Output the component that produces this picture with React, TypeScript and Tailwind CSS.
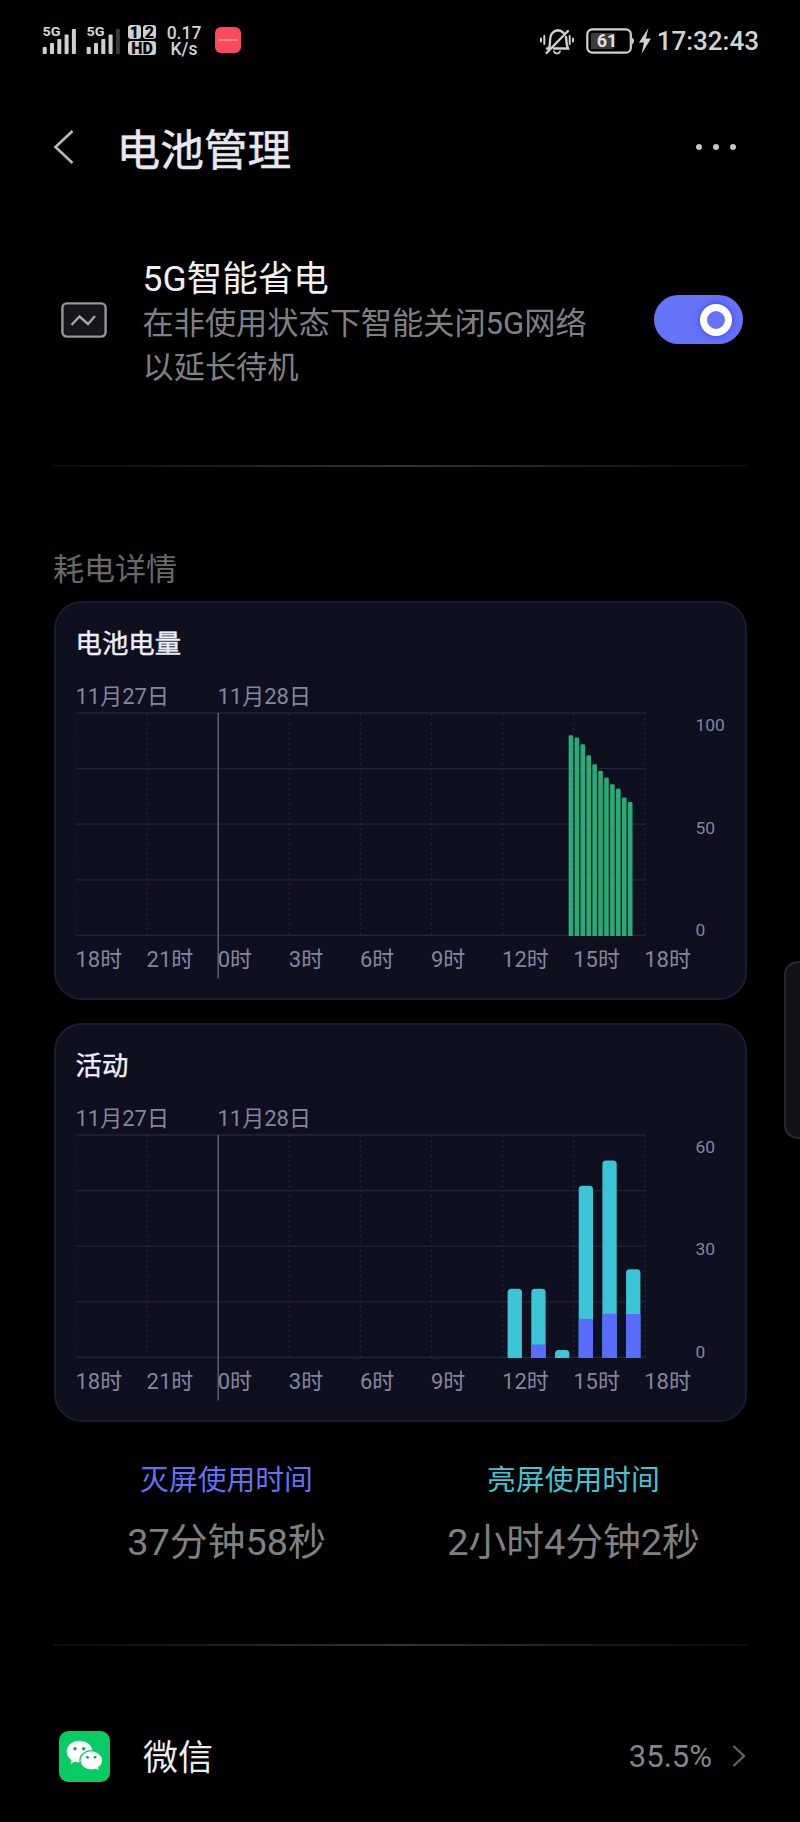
import React from 'react';

interface ActivityBar {
  hour: number;
  total: number;
  off: number;
}

interface ChartCardProps {
  title: string;
  scale: number[];
  children: React.ReactNode;
}

const CHART_W = 569;
const CHART_H = 222.4;
const STEP = 71.1;

const hours = ['18时', '21时', '0时', '3时', '6时', '9时', '12时', '15时', '18时'];
const batteryLevels = [90, 89, 86, 81, 77, 74, 71, 68, 66, 62, 60];
const activity: ActivityBar[] = [
  { hour: 18, total: 18.5, off: 0 },
  { hour: 19, total: 18.5, off: 3.5 },
  { hour: 20, total: 2, off: 0 },
  { hour: 21, total: 46.3, off: 10.4 },
  { hour: 22, total: 53.1, off: 11.8 },
  { hour: 23, total: 23.8, off: 11.7 },
];

// bar with only its top corners rounded
const barPath = (x: number, w: number, h: number, r: number) =>
  `M${x} ${CHART_H + 0.6}V${CHART_H - h + r}q0 ${-r} ${r} ${-r}h${w - 2 * r}q${r} 0 ${r} ${r}V${CHART_H + 0.6}z`;

const SignalIcon = ({ weak = false }: { weak?: boolean }) => (
  <svg width="36" height="32" viewBox="0 0 36 32" className="shrink-0">
    <text x="0.5" y="11" fontSize="12.5" fontWeight="700" textLength="18" lengthAdjust="spacingAndGlyphs" fill="#d6d6d6">
      5G
    </text>
    {[7, 11, 15, 19.5, 25].map((h, i) => (
      <rect key={i} x={0.7 + i * 7.3} y={29 - h} width="4" height={h} rx="0.8" fill={weak && i === 4 ? '#3a3a3a' : '#cfcfcf'} />
    ))}
  </svg>
);

const StatusBar = () => (
  <div className="flex h-[82px] items-center justify-between pr-[41px] pl-[42px] text-[#d2d2d2]">
    <div className="flex items-center">
      <SignalIcon />
      <div className="ml-2">
        <SignalIcon weak />
      </div>
      <div className="ml-[6px] grid w-[28px] grid-cols-2 gap-x-[2px] gap-y-[2px] pb-[3px] text-center font-black text-black">
        <span className="h-[14px] rounded-[3px] bg-[#cfcfcf] text-[16px] leading-[15px]">1</span>
        <span className="h-[14px] rounded-[3px] bg-[#cfcfcf] text-[16px] leading-[15px]">2</span>
        <span className="col-span-2 h-[14px] rounded-[3px] bg-[#cfcfcf] text-[16px] leading-[15px]">HD</span>
      </div>
      <div className="ml-[10px] w-[36px] text-center text-[17.500px] leading-[16.500px] font-medium">
        <p>0.17</p>
        <p>K/s</p>
      </div>
      <div className="mb-[2px] ml-[13px] flex h-[26px] w-[26px] items-center justify-center rounded-[6px] bg-[#fb4a5c]">
        <span className="h-[2px] w-[20px] rounded bg-[#fb8f88]" />
      </div>
    </div>
    <div className="flex items-center">
      <svg width="36" height="30" viewBox="0 0 36 30" fill="none" stroke="#d0d0d0" strokeWidth="2" strokeLinecap="round">
        <path d="M2 12.500v3M5.300 10v8M30.700 10v8M34 12.500v3" />
        <path d="M8 22.500h1.500c1.500-2 1.500-4 1.500-8 0-5 2.500-9.500 7.500-10.200 2.500 0 4.500 1 6 2.500M27 11c.7 6 .4 8 2 11.500H15M29 5L7.500 27" strokeWidth="2.400" />
        <path d="M15 25.500c1 2.500 5 2.500 6 0" />
      </svg>
      <svg width="48" height="26" viewBox="0 0 48 26" className="ml-[11px]">
        <rect x="5" y="5" width="22" height="16" fill="#3c3c3c" />
        <rect x="1.300" y="1.300" width="43.500" height="23.400" rx="5" fill="none" stroke="#d0d0d0" strokeWidth="2.200" />
        <path d="M46 9.500q2 1 2 3.500t-2 3.500z" fill="#d0d0d0" />
        <text x="21" y="19.300" textAnchor="middle" fontSize="18" fontWeight="700" fill="#e2e2e2">
          61
        </text>
      </svg>
      <svg width="12" height="26" viewBox="0 0 12 26" className="ml-[5px]">
        <path d="M9.500 0L0 14.500h5L2.500 26 12 10.500H6.800z" fill="#d0d0d0" />
      </svg>
      <span className="ml-[6px] text-[26px] leading-[30px] font-medium">17:32:43</span>
    </div>
  </div>
);

const Header = () => (
  <header className="flex h-[130px] items-center pr-[64px] pl-[53px]">
    <svg width="22" height="36" viewBox="0 0 22 36" fill="none" stroke="#b9b9b9" strokeWidth="2.600">
      <path d="M19.500 2L2.500 18l17 16" />
    </svg>
    <h1 className="mt-[7px] ml-[41.500px] flex-1 text-[43.700px] leading-[60px] text-[#e9e8f2] [-webkit-text-stroke:0.5px_#e9e8f2]">
      电池管理
    </h1>
    <div className="flex gap-[11px]">
      <span className="h-[6px] w-[6px] rounded-full bg-[#c4c4c4]" />
      <span className="h-[6px] w-[6px] rounded-full bg-[#c4c4c4]" />
      <span className="h-[6px] w-[6px] rounded-full bg-[#c4c4c4]" />
    </div>
  </header>
);

const Divider = () => <div className="mx-[53px] h-[2px] bg-linear-to-r from-[#0b0b0b] via-[#333333] to-[#0b0b0b]" />;

const ChartCard: React.FC<ChartCardProps> = ({ title, scale, children }) => (
  <section className="mx-[53.500px] h-[399px] rounded-[28px] border-2 border-[#1b1c30] bg-[#0e0f1f] pt-[22px] pl-[20px]">
    <h2 className="text-[26.400px] leading-[38px] text-[#eeeefa] [-webkit-text-stroke:0.4px_#eeeefa]">{title}</h2>
    <div className="mt-[19px] flex text-[22px] leading-[30px] text-[#85869a]">
      <span className="w-[142px]">11月27日</span>
      <span>11月28日</span>
    </div>
    <div className="mt-[1px] flex">
      <svg width={CHART_W} height={CHART_H} className="overflow-visible">
        {[0, 1, 2, 3, 4].map((i) => (
          <line key={i} x1="0" x2={CHART_W + 1} y1={(i * CHART_H) / 4} y2={(i * CHART_H) / 4} stroke="#242538" strokeWidth="1.300" />
        ))}
        {hours.map((_, i) => (
          <line
            key={i}
            x1={i * STEP}
            x2={i * STEP}
            y1="0"
            y2={CHART_H}
            stroke={i === 0 ? '#171829' : '#232436'}
            strokeWidth="1.300"
            strokeDasharray="2 3"
          />
        ))}
        <line x1={STEP * 2} x2={STEP * 2} y1="0" y2="265.500" stroke="#6a6b7a" strokeWidth="1.300" />
        {children}
      </svg>
      <div className="mt-[2px] ml-[51px] flex h-[225px] flex-col justify-between text-[17.400px] leading-[20px] text-[#85869a]">
        {scale.map((n) => (
          <span key={n}>{n}</span>
        ))}
      </div>
    </div>
    <div className="-mt-[2px] flex text-[22px] leading-[44px] text-[#85869a]">
      {hours.map((h, i) => (
        <span key={i} className="w-[71.100px] shrink-0">
          {h}
        </span>
      ))}
    </div>
  </section>
);

const WechatIcon = () => (
  <svg width="51" height="51" viewBox="0 0 51 51">
    <rect width="51" height="51" rx="9.500" fill="#08cb63" />
    <path d="M13 28l-1.500 5 5.500-3z" fill="#fff" />
    <ellipse cx="20.500" cy="20.500" rx="12.800" ry="10.800" fill="#fff" />
    <ellipse cx="32.300" cy="29.300" rx="11.400" ry="9.700" fill="#fff" stroke="#08cb63" strokeWidth="1.200" />
    <path d="M36 37l3.500 2-.8-4.500z" fill="#fff" />
    <g fill="#08a858">
      <circle cx="16" cy="17.700" r="1.700" />
      <circle cx="24.700" cy="17.700" r="1.700" />
      <circle cx="28.500" cy="26.300" r="1.400" />
      <circle cx="36" cy="26.300" r="1.400" />
    </g>
  </svg>
);

export default function App() {
  return (
    <div className="relative h-[1822px] w-[800px] overflow-hidden bg-black font-['Roboto','Noto_Sans_CJK_SC',sans-serif]">
      <StatusBar />
      <Header />

      {/* 5G power saving */}
      <div className="mt-[44px] flex h-[132px] items-center">
        <svg width="46" height="36" viewBox="0 0 46 36" className="mb-[5px] ml-[61px] shrink-0" fill="none">
          <rect x="1.400" y="1.400" width="43.200" height="33.200" rx="4.500" fill="#141619" stroke="#96969c" strokeWidth="2.400" />
          <path d="M10.500 23l8-8.500 8.500 7.500 7-8" stroke="#a4a4aa" strokeWidth="2.400" />
        </svg>
        <div className="mt-[2px] ml-[35.500px] flex-1">
          <h2 className="text-[35.500px] leading-[45px] text-[#efeff3]">5G智能省电</h2>
          <p className="w-[460px] text-[31.200px] leading-[43.500px] text-[#808084]">在非使用状态下智能关闭5G网络以延长待机</p>
        </div>
        <button className="mr-[57.500px] mb-[5px] flex h-[49px] w-[89px] items-center justify-end rounded-full bg-[#6674fc] pr-[11px]">
          <span className="h-[32px] w-[32px] rounded-full border-[7.500px] border-white shadow-[0_0_8px_rgba(40,40,180,0.6)]" />
        </button>
      </div>

      <div className="mt-[77px]">
        <Divider />
      </div>

      <p className="mt-[80px] ml-[53px] h-[54px] text-[31px] leading-[46px] text-[#696969]">耗电详情</p>

      <ChartCard title="电池电量" scale={[100, 50, 0]}>
        {batteryLevels.map((level, i) => (
          <path key={i} d={barPath(492.6 + i * 5.93, 4.6, (level / 100) * CHART_H, 1.3)} fill="#27ac79" />
        ))}
      </ChartCard>

      <div className="h-[22.600px]" />

      <ChartCard title="活动" scale={[60, 30, 0]}>
        {activity.map(({ hour, total, off }) => {
          const x = 5 + (hour * STEP) / 3;
          const offH = (off / 60) * CHART_H;
          return (
            <g key={hour}>
              <path d={barPath(x, 14.3, (total / 60) * CHART_H, 3.5)} fill="#3cc5d6" />
              {off > 0 && <path d={barPath(x, 14.3, offH, 1)} fill="#5a6cfd" />}
            </g>
          );
        })}
      </ChartCard>

      <div className="mx-[53px] mt-[37px] grid grid-cols-2 text-center">
        <div>
          <p className="text-[28.800px] leading-[42px] text-[#6670f5]">灭屏使用时间</p>
          <p className="mt-[13px] text-[37.800px] leading-[56px] text-[#808082]">37分钟58秒</p>
        </div>
        <div>
          <p className="text-[28.800px] leading-[42px] text-[#3fc6d6]">亮屏使用时间</p>
          <p className="mt-[13px] text-[37.800px] leading-[56px] text-[#808082]">2小时4分钟2秒</p>
        </div>
      </div>

      <div className="mt-[74px]">
        <Divider />
      </div>

      {/* app usage row */}
      <div className="mt-[84.500px] flex h-[52px] items-center pr-[54px] pl-[59px]">
        <WechatIcon />
        <span className="mt-[5px] ml-[33px] flex-1 text-[35px] leading-[50px] text-[#ededf0]">微信</span>
        <span className="mt-[2px] text-[31px] leading-[40px] text-[#858587]">35.5%</span>
        <svg width="14" height="24" viewBox="0 0 14 24" className="ml-[20px]" fill="none" stroke="#626264" strokeWidth="2.400">
          <path d="M1.500 2L12 12 1.500 22" />
        </svg>
      </div>

      {/* edge panel handle */}
      <div className="absolute top-[961px] left-[784px] h-[178px] w-[30px] rounded-l-[14px] border-2 border-[#29292d] bg-[#131317]" />
    </div>
  );
}
